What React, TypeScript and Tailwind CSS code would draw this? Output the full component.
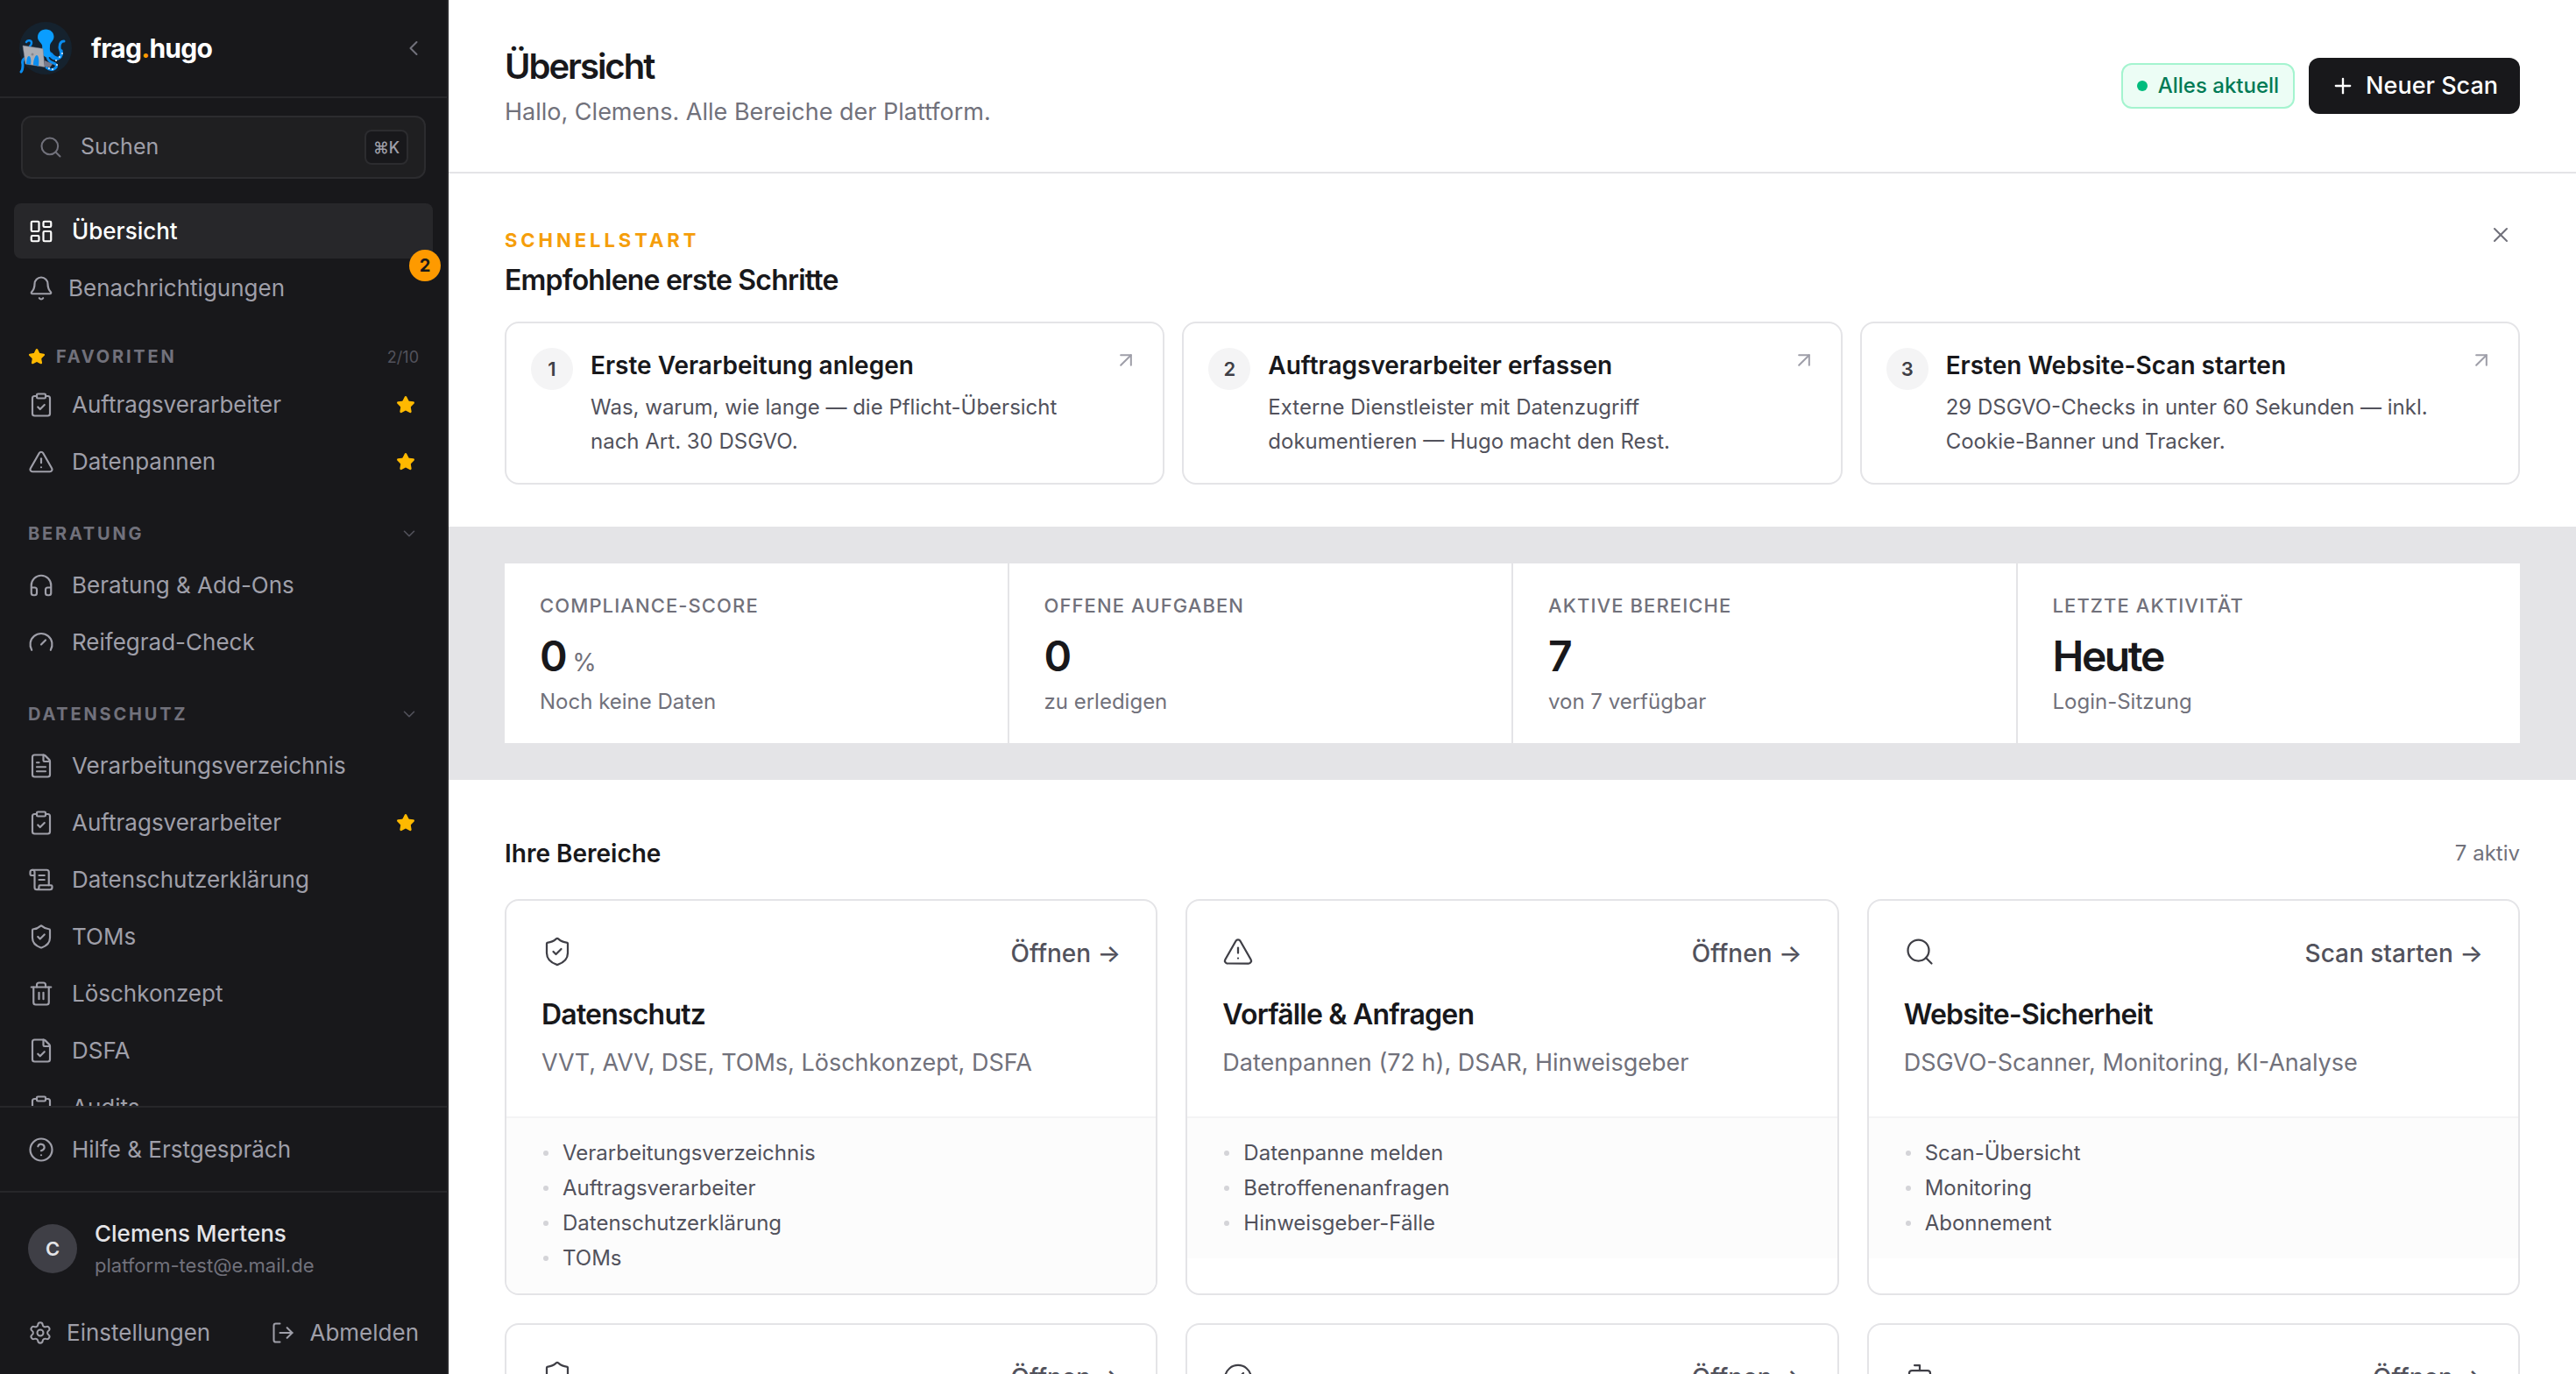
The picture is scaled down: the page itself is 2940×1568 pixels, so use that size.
import {
  AlertTriangle, ArrowUpRight, Bell, Bot, ChevronDown, ChevronLeft, CircleHelp, ClipboardCheck,
  FileCheck, FileText, Gauge, Headphones, LayoutDashboard, LogOut, Plus, ScrollText, Search,
  Settings, Shield, ShieldCheck, Star, Trash2, X, type LucideIcon,
} from "lucide-react";

type NavEntry = { label: string; icon: LucideIcon; starred?: boolean };

const favorites: NavEntry[] = [
  { label: "Auftragsverarbeiter", icon: ClipboardCheck, starred: true },
  { label: "Datenpannen", icon: AlertTriangle, starred: true },
];

const sections: { title: string; items: NavEntry[] }[] = [
  {
    title: "Beratung",
    items: [
      { label: "Beratung & Add-Ons", icon: Headphones },
      { label: "Reifegrad-Check", icon: Gauge },
    ],
  },
  {
    title: "Datenschutz",
    items: [
      { label: "Verarbeitungsverzeichnis", icon: FileText },
      { label: "Auftragsverarbeiter", icon: ClipboardCheck, starred: true },
      { label: "Datenschutzerklärung", icon: ScrollText },
      { label: "TOMs", icon: ShieldCheck },
      { label: "Löschkonzept", icon: Trash2 },
      { label: "DSFA", icon: FileCheck },
      { label: "Audits", icon: ClipboardCheck },
    ],
  },
];

const steps = [
  { title: "Erste Verarbeitung anlegen", lines: ["Was, warum, wie lange — die Pflicht-Übersicht", "nach Art. 30 DSGVO."] },
  { title: "Auftragsverarbeiter erfassen", lines: ["Externe Dienstleister mit Datenzugriff", "dokumentieren — Hugo macht den Rest."] },
  { title: "Ersten Website-Scan starten", lines: ["29 DSGVO-Checks in unter 60 Sekunden — inkl.", "Cookie-Banner und Tracker."] },
];

const stats = [
  { label: "Compliance-Score", value: "0", unit: "%", note: "Noch keine Daten" },
  { label: "Offene Aufgaben", value: "0", note: "zu erledigen" },
  { label: "Aktive Bereiche", value: "7", note: "von 7 verfügbar" },
  { label: "Letzte Aktivität", value: "Heute", note: "Login-Sitzung" },
];

const areas: { title: string; text: string; action: string; icon: LucideIcon; links: string[] }[] = [
  {
    title: "Datenschutz", text: "VVT, AVV, DSE, TOMs, Löschkonzept, DSFA", action: "Öffnen →", icon: ShieldCheck,
    links: ["Verarbeitungsverzeichnis", "Auftragsverarbeiter", "Datenschutzerklärung", "TOMs"],
  },
  {
    title: "Vorfälle & Anfragen", text: "Datenpannen (72 h), DSAR, Hinweisgeber", action: "Öffnen →", icon: AlertTriangle,
    links: ["Datenpanne melden", "Betroffenenanfragen", "Hinweisgeber-Fälle"],
  },
  {
    title: "Website-Sicherheit", text: "DSGVO-Scanner, Monitoring, KI-Analyse", action: "Scan starten →", icon: Search,
    links: ["Scan-Übersicht", "Monitoring", "Abonnement"],
  },
  { title: "", text: "", action: "Öffnen →", icon: Shield, links: [] },
  { title: "", text: "", action: "Öffnen →", icon: Gauge, links: [] },
  { title: "", text: "", action: "Öffnen →", icon: Bot, links: [] },
];

function Logo() {
  return (
    <svg viewBox="0 0 60 60" className="size-[60px] shrink-0 overflow-visible" aria-hidden="true">
      <circle cx="30" cy="30" r="30" fill="#15222e" />
      <g fill="none" stroke="#0a8df0" strokeLinecap="round" strokeLinejoin="round">
        <path d="M8 23c2-3 6-2 6 1 0 2-1 3-2 4" strokeWidth="2.5" />
        <path d="M51 22c-4 0-5 3-5 7s4 7 1 11c-3 3-8 0-11-4" strokeWidth="3" />
        <path d="M33 32c2 7 6 11 11 10 5-2 4-6 4-9" strokeWidth="3.5" />
        <path d="M31 34c0 7 3 12 8 13 4 1 5 5 0 7-3 1-6 0-8-2" strokeWidth="3" />
        <path d="M8 41c-4 1-5 4-4 8 0 4 0 6-2 8" strokeWidth="3" />
      </g>
      <path d="M30.500 8.500c-6 0-9.500 4-9.500 9 0 4 4 6 5 9 1 5-2 10 3 13 3 2 6 1 8-1-3-4-2-8-2-11 0-4 4.500-6 4.500-10.500 0-5-4-8.500-9-8.500z" fill="#0a9dff" />
      <path d="M4 27l23 3.500 2 21L7 48z" fill="#abadb3" stroke="#77798a" strokeWidth="0.5" />
      <circle cx="15" cy="37" r="1.500" fill="#85878f" />
      <path d="M8 48c0-4 1-9 3-9s3 5 2 9.500zM16 49c0-5 2-11 4-11s3 6 2 12.500z" fill="#0a8df0" />
      <path d="M29 44l9 4-3 4-6-1z" fill="#77798a" />
      <g fill="#fff">
        <circle cx="46" cy="40" r="0.9" /><circle cx="49" cy="36" r="0.9" /><circle cx="42" cy="44" r="0.9" />
        <circle cx="43" cy="49" r="0.9" /><circle cx="38" cy="54" r="0.9" /><circle cx="34" cy="53" r="0.9" />
      </g>
    </svg>
  );
}

function NavLink({ item }: { item: NavEntry }) {
  const Icon = item.icon;
  return (
    <a href="#" className="flex h-[63px] items-center gap-5 rounded-lg pl-4 pr-5 text-[26px]">
      <Icon size={30} strokeWidth={1.75} className="shrink-0" />
      <span className="flex-1">{item.label}</span>
      {item.starred && <Star size={22} strokeWidth={1.75} className="fill-amber-400 text-amber-400" />}
    </a>
  );
}

function Sidebar() {
  return (
    <aside className="flex w-[512px] shrink-0 flex-col border-r-2 border-[#27272a] bg-[#18181b] text-[#9f9fa9]">
      <div className="flex h-28 shrink-0 items-center border-b-2 border-[#27272a] pl-[22px] pr-6">
        <Logo />
        <span className="ml-[22px] flex-1 text-[30px] font-bold tracking-tight text-white">
          frag<span className="text-amber-500">.</span>hugo
        </span>
        <button type="button" aria-label="Seitenleiste einklappen" className="text-[#71717b]">
          <ChevronLeft size={28} strokeWidth={1.75} />
        </button>
      </div>

      <button type="button" className="mx-6 mt-5 flex h-[72px] shrink-0 items-center rounded-xl border-2 border-[#2c2c2f] bg-[#1f1f21] px-[18px] text-[25px]">
        <Search size={28} strokeWidth={1.75} className="text-[#71717b]" />
        <span className="ml-5 flex-1 text-left">Suchen</span>
        <kbd className="flex h-10 w-[50px] items-center justify-center rounded-lg border-2 border-[#2c2c2f] bg-[#18181b] font-['Inter','DejaVu_Sans',sans-serif] text-[18px] font-medium">⌘K</kbd>
      </button>

      <nav className="mt-7 min-h-0 flex-1 overflow-hidden px-4">
        <div className="flex flex-col gap-0.5">
          <a href="#" aria-current="page" className="flex h-[63px] items-center gap-5 rounded-lg bg-[#27272a] px-4 text-[26px] font-medium text-white">
            <LayoutDashboard size={30} strokeWidth={1.75} />
            Übersicht
          </a>
          <a href="#" className="relative flex h-[63px] items-center gap-4 rounded-lg px-4 text-[26px]">
            <Bell size={30} strokeWidth={1.75} />
            Benachrichtigungen
            <span className="absolute -right-[9px] -top-3 flex size-9 items-center justify-center rounded-full bg-amber-500 text-[20px] font-bold text-[#18181b]">2</span>
          </a>
        </div>

        <div className="mt-8 flex h-[30px] items-center gap-3 px-4 text-[20px]">
          <Star size={20} strokeWidth={1.75} className="fill-amber-400 text-amber-400" />
          <h2 className="flex-1 font-bold uppercase tracking-[0.14em] text-[#71717b]">Favoriten</h2>
          <span className="text-[18px] text-[#52525c]">2/10</span>
        </div>
        <div className="mt-2 flex flex-col gap-0.5">
          {favorites.map((item) => <NavLink key={item.label} item={item} />)}
        </div>

        {sections.map((section) => (
          <div key={section.title}>
            <button type="button" className="mt-9 flex h-[30px] w-full items-center justify-between px-4 text-[20px] font-bold uppercase tracking-[0.14em] text-[#71717b]">
              {section.title}
              <ChevronDown size={22} strokeWidth={1.75} className="text-[#52525c]" />
            </button>
            <div className="mt-3 flex flex-col gap-0.5">
              {section.items.map((item) => <NavLink key={item.label} item={item} />)}
            </div>
          </div>
        ))}
      </nav>

      <div className="shrink-0 border-t-2 border-[#27272a] p-4">
        <NavLink item={{ label: "Hilfe & Erstgespräch", icon: CircleHelp }} />
      </div>

      <div className="shrink-0 border-t-2 border-[#27272a] px-8 pb-4 pt-7">
        <div className="flex items-center gap-5">
          <div className="flex size-14 items-center justify-center rounded-full bg-[#3f3f46] text-[22px] font-semibold text-[#e4e4e7]">C</div>
          <div>
            <p className="text-[26px] leading-[38px] font-medium text-[#e4e4e7]">Clemens Mertens</p>
            <p className="text-[22px] leading-[34px] text-[#71717b]">platform-test@e.mail.de</p>
          </div>
        </div>
        <div className="mt-7 flex h-[63px] items-center justify-between text-[26px]">
          <a href="#" className="flex items-center gap-4"><Settings size={28} strokeWidth={1.75} />Einstellungen</a>
          <button type="button" className="flex items-center gap-4"><LogOut size={28} strokeWidth={1.75} />Abmelden</button>
        </div>
      </div>
    </aside>
  );
}

export default function App() {
  return (
    <div className="flex h-screen overflow-hidden bg-white font-['Inter',sans-serif] text-[#18181b]">
      <Sidebar />
      <main className="min-w-0 flex-1 overflow-hidden">
        <header className="flex h-[198px] items-center justify-between border-b-2 border-[#e4e4e7] px-16">
          <div className="pt-1">
            <h1 className="text-[40px] leading-[50px] font-semibold tracking-tighter">Übersicht</h1>
            <p className="mt-1.5 text-[27px] leading-[42px] text-[#71717b]">Hallo, Clemens. Alle Bereiche der Plattform.</p>
          </div>
          <div className="flex items-center gap-4">
            <span className="flex h-[52px] items-center gap-3 rounded-xl border-2 border-emerald-200 bg-emerald-50 px-4 text-[24px] font-medium text-emerald-700">
              <span className="size-3 rounded-full bg-emerald-500" />
              Alles aktuell
            </span>
            <button type="button" className="flex h-16 items-center gap-3 rounded-xl bg-[#18181b] px-[25px] text-[27px] font-medium text-white">
              <Plus size={28} strokeWidth={2} />
              Neuer Scan
            </button>
          </div>
        </header>

        <section className="px-16 py-12">
          <div className="flex items-start justify-between">
            <div className="pt-3">
              <p className="text-[22px] leading-8 font-bold uppercase tracking-[0.18em] text-[#f59e0b]">Schnellstart</p>
              <h2 className="mt-2 text-[32px] leading-[44px] font-semibold tracking-tight">Empfohlene erste Schritte</h2>
            </div>
            <button type="button" aria-label="Schnellstart schließen" className="p-2 text-[#71717b]">
              <X size={28} strokeWidth={1.75} />
            </button>
          </div>
          <div className="mt-[25px] grid grid-cols-3 gap-5">
            {steps.map((step, i) => (
              <a key={step.title} href="#" className="flex items-start gap-5 rounded-2xl border-2 border-[#e4e4e7] p-7">
                <span className="flex size-12 shrink-0 items-center justify-center rounded-full bg-[#f4f4f5] text-[22px] font-semibold text-[#3f3f46]">{i + 1}</span>
                <span className="flex-1">
                  <span className="block text-[28px] leading-10 font-semibold">{step.title}</span>
                  <span className="mt-2 block text-[24px] leading-[39px] text-[#52525c]">{step.lines[0]}<br />{step.lines[1]}</span>
                </span>
                <ArrowUpRight size={28} strokeWidth={1.75} className="shrink-0 text-[#9f9fa9]" />
              </a>
            ))}
          </div>
        </section>

        <section className="bg-[#e4e4e7] px-16 py-[42px]">
          <dl className="grid grid-cols-4 gap-0.5">
            {stats.map((stat) => (
              <div key={stat.label} className="bg-white px-10 pb-[29px] pt-8">
                <dt className="text-[22px] leading-8 font-medium uppercase tracking-wider text-[#71717b]">{stat.label}</dt>
                <dd className="mt-[14px] flex items-baseline gap-2 text-[48px] leading-[56px] font-semibold tracking-tighter">
                  {stat.value}
                  {stat.unit && <span className="text-[28px] leading-none font-normal text-[#71717b]">{stat.unit}</span>}
                </dd>
                <dd className="mt-1.5 text-[24px] leading-9 text-[#71717b]">{stat.note}</dd>
              </div>
            ))}
          </dl>
        </section>

        <section className="px-16 pt-16">
          <div className="flex h-10 items-center justify-between">
            <h2 className="text-[28px] font-semibold">Ihre Bereiche</h2>
            <span className="text-[24px] text-[#71717b]">7 aktiv</span>
          </div>
          <div className="mt-8 grid grid-cols-3 gap-8">
            {areas.map((area, i) => {
              const Icon = area.icon;
              return (
                <article key={i} className="overflow-hidden rounded-2xl border-2 border-[#e4e4e7]">
                  <div className="min-h-[246px] p-10">
                    <div className="flex items-start justify-between">
                      <Icon size={36} strokeWidth={1.5} className="text-[#3f3f46]" />
                      <a href="#" className="text-[28px] leading-10 font-medium text-[#52525c]">{area.action}</a>
                    </div>
                    <h3 className="mt-7 text-[32px] leading-[44px] font-semibold tracking-tight">{area.title}</h3>
                    <p className="mt-3 text-[27px] leading-[42px] text-[#71717b]">{area.text}</p>
                  </div>
                  {area.links.length > 0 && (
                    <ul className="flex flex-col gap-2 border-t-2 border-[#f4f4f5] bg-[#fcfcfc] px-10 py-6">
                      {area.links.map((link) => (
                        <li key={link} className="flex items-center gap-4 text-[24px] leading-8 text-[#52525c]">
                          <span className="ml-0.5 size-1.5 rounded-full bg-[#d4d4d8]" />
                          {link}
                        </li>
                      ))}
                    </ul>
                  )}
                </article>
              );
            })}
          </div>
        </section>
      </main>
    </div>
  );
}
